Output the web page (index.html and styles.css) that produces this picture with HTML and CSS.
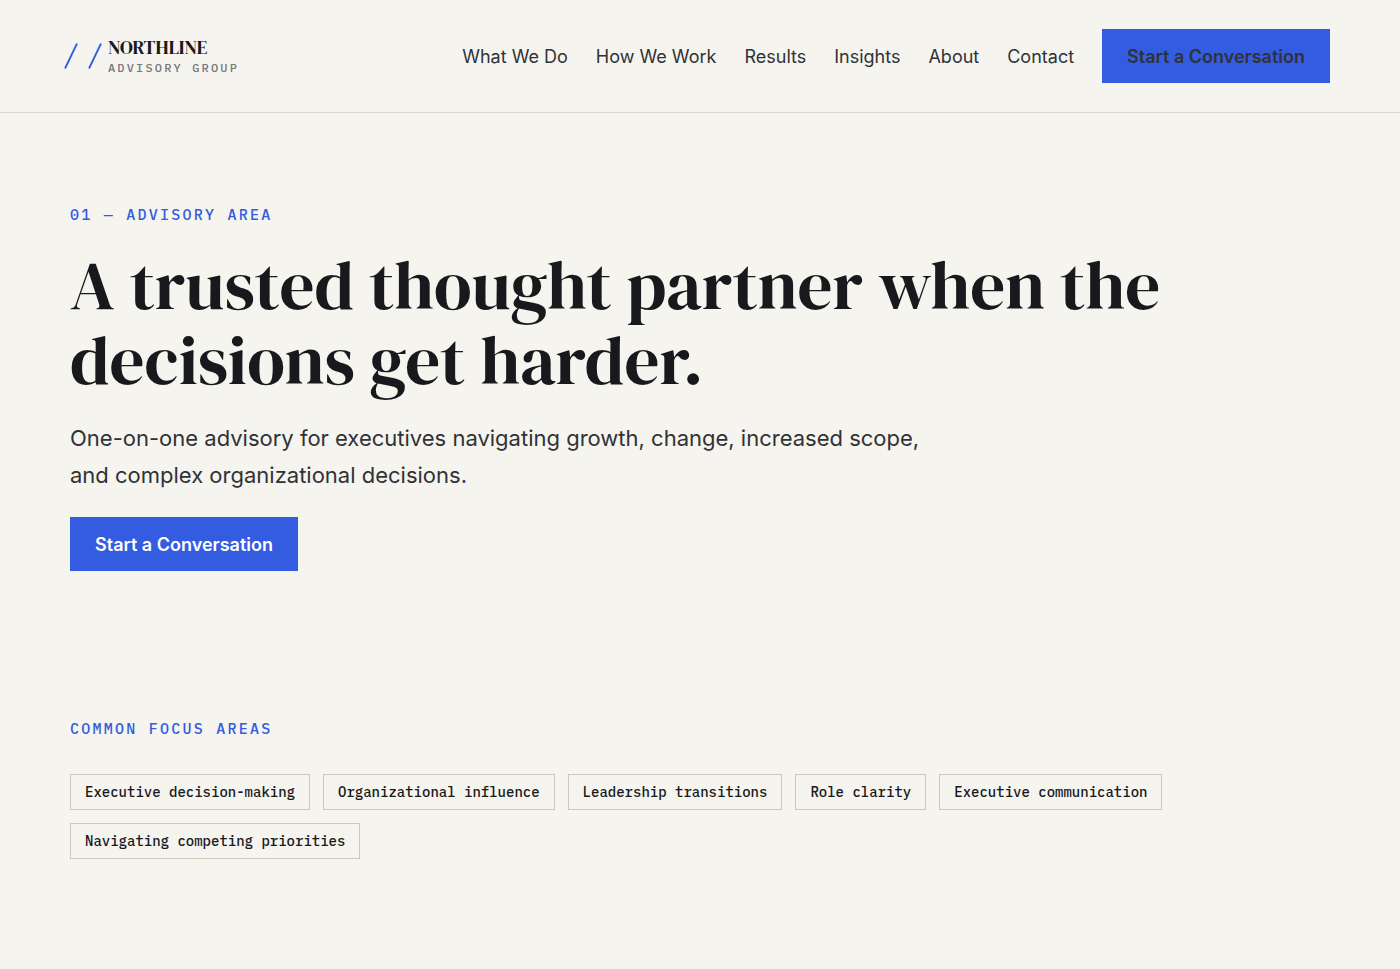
FILE: index.html
```html
<!DOCTYPE html>
<html lang="en">
<head>
  <meta charset="UTF-8">
  <meta name="viewport" content="width=device-width, initial-scale=1">
  <title>Northline Advisory Group</title>
  <link rel="stylesheet" href="styles.css">
</head>
<body>

  <header class="site-header">
    <div class="container header-inner">
      <a class="brand" href="#">
        <svg class="brand-mark" viewBox="0 0 38 26" aria-hidden="true">
          <path d="M1 25.500 13 0.500M25 25.500 37 0.500"/>
        </svg>
        <span class="brand-text">
          <span class="brand-name">NORTHLINE</span>
          <span class="brand-sub">ADVISORY GROUP</span>
        </span>
      </a>
      <nav class="nav">
        <a href="#">What We Do</a>
        <a href="#">How We Work</a>
        <a href="#">Results</a>
        <a href="#">Insights</a>
        <a href="#">About</a>
        <a href="#">Contact</a>
        <a class="btn" href="#">Start a Conversation</a>
      </nav>
    </div>
  </header>

  <main>
    <section class="hero">
      <div class="container">
        <p class="eyebrow">01 — ADVISORY AREA</p>
        <h1>A trusted thought partner when the decisions get harder.</h1>
        <p class="lead">One-on-one advisory for executives navigating growth, change, increased scope, and complex organizational decisions.</p>
        <a class="btn" href="#">Start a Conversation</a>
      </div>
    </section>

    <section class="focus">
      <div class="container">
        <h2 class="eyebrow">COMMON FOCUS AREAS</h2>
        <ul class="tags">
          <li>Executive decision-making</li>
          <li>Organizational influence</li>
          <li>Leadership transitions</li>
          <li>Role clarity</li>
          <li>Executive communication</li>
          <li>Navigating competing priorities</li>
        </ul>
      </div>
    </section>
  </main>

</body>
</html>
```
FILE: styles.css
```css
:root {
  --bg: #f5f4ef;
  --ink: #18191c;
  --text: #303236;
  --blue: #345ce0;
  --line: #d5d4d0;
  --mono: "IBM Plex Mono", "Liberation Mono", monospace;
  --serif: "DM Serif Display", "Liberation Serif", serif;
}
* {
  box-sizing: border-box;
}
body {
  margin: 0;
  background: var(--bg);
  color: var(--text);
  font-family: Inter, sans-serif;
  font-size: 18px;
  line-height: 30px;
}
a {
  color: inherit;
  text-decoration: none;
}
.container {
  width: 90%;
  max-width: 1320px;
  margin: 0 auto;
}
.site-header {
  border-bottom: 1px solid var(--line);
}
.header-inner {
  display: flex;
  align-items: center;
  justify-content: space-between;
  padding: 29px 0;
}
.brand {
  display: flex;
  align-items: center;
  gap: 6px;
  margin-left: -6px;
}
.brand-mark {
  width: 38px;
  height: 26px;
  fill: none;
  stroke: var(--blue);
  stroke-width: 1.8;
}
.brand-text {
  display: flex;
  flex-direction: column;
  padding-top: 2px;
}
.brand-name {
  color: var(--ink);
  font-family: var(--serif);
  font-size: 19px;
  font-weight: 400;
  line-height: 22px;
}
.brand-sub {
  color: #77787a;
  font-family: var(--mono);
  font-size: 12px;
  font-weight: 500;
  line-height: 20px;
  letter-spacing: 0.18em;
}
.nav {
  display: flex;
  align-items: baseline;
  gap: 28px;
}
.btn {
  display: inline-block;
  padding: 13px 25px 11px;
  background: var(--blue);
  color: #fff;
  font-weight: 600;
}
.nav .btn {
  color: var(--text);
}
.hero {
  padding: 88px 0 72px;
}
.eyebrow {
  margin: 0;
  color: var(--blue);
  font-family: var(--mono);
  font-size: 15px;
  font-weight: 500;
  line-height: 28px;
  letter-spacing: 0.15em;
}
h1 {
  max-width: 1120px;
  margin: 19px 0 22px;
  color: var(--ink);
  font-family: var(--serif);
  font-size: 69px;
  font-weight: 400;
  line-height: 75px;
}
.lead {
  max-width: 850px;
  margin: 0 0 23px;
  font-size: 22px;
  line-height: 37px;
}
.focus {
  padding: 72px 0 110px;
}
.tags {
  display: flex;
  flex-wrap: wrap;
  gap: 13px;
  max-width: 1120px;
  margin: 31px 0 0;
  padding: 0;
  list-style: none;
}
.tags li {
  padding: 6px 14px;
  border: 1px solid #cfc8b8;
  color: var(--ink);
  font-family: var(--mono);
  font-size: 14px;
  font-weight: 500;
  line-height: 22px;
}
```
